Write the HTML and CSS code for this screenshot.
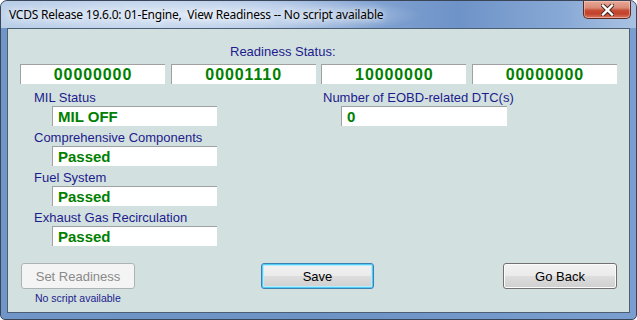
FILE: index.html
```html
<!DOCTYPE html>
<html>
<head>
<meta charset="utf-8">
<link rel="stylesheet" href="styles.css">
</head>
<body>
<div class="window">
  <div class="titlebar">
    <span class="title">VCDS Release 19.6.0: 01-Engine,  View Readiness -- No script available</span>
    <div class="close">
      <svg width="13" height="12" viewBox="0 0 13 12">
        <path d="M2 1.5 L11 10.5 M11 1.5 L2 10.5" stroke="#4a2a24" stroke-width="4.4" stroke-linecap="square" fill="none"/>
        <path d="M2 1.5 L11 10.5 M11 1.5 L2 10.5" stroke="#ffffff" stroke-width="2.4" stroke-linecap="square" fill="none"/>
      </svg>
    </div>
  </div>
  <div class="client">
    <div class="status-label">Readiness Status:</div>
    <div class="status-row">
      <div class="field bits">00000000</div>
      <div class="field bits">00001110</div>
      <div class="field bits">10000000</div>
      <div class="field bits">00000000</div>
    </div>
    <div class="columns">
      <div class="col">
        <div class="group"><div class="label">MIL Status</div><div class="field value">MIL OFF</div></div>
        <div class="group"><div class="label">Comprehensive Components</div><div class="field value">Passed</div></div>
        <div class="group"><div class="label">Fuel System</div><div class="field value">Passed</div></div>
        <div class="group"><div class="label">Exhaust Gas Recirculation</div><div class="field value">Passed</div></div>
      </div>
      <div class="col">
        <div class="group"><div class="label">Number of EOBD-related DTC(s)</div><div class="field value dtc">0</div></div>
      </div>
    </div>
    <div class="buttons">
      <div class="btn disabled">Set Readiness</div>
      <div class="btn default">Save</div>
      <div class="btn">Go Back</div>
    </div>
    <div class="note">No script available</div>
  </div>
</div>
</body>
</html>
```

FILE: styles.css
```css
html, body {
  margin: 0;
  padding: 0;
  background: #ffffff;
}

.window {
  box-sizing: border-box;
  width: 637px;
  height: 320px;
  border: 1px solid #3a4658;
  border-radius: 7px 7px 5px 5px;
  background: linear-gradient(to right, #7096c9 0%, #6c92c6 50%, #7a9ecf 100%);
  display: flex;
  flex-direction: column;
  overflow: hidden;
  font-family: "Liberation Sans", Arial, sans-serif;
}

.titlebar {
  height: 27px;
  flex: none;
  display: flex;
  align-items: flex-start;
  background:
    radial-gradient(ellipse 230px 22px at 190px 14px, rgba(232,240,250,0.85) 0%, rgba(220,232,246,0.55) 60%, rgba(220,232,246,0) 100%),
    linear-gradient(to right, #b8cde7 0%, #a9c1e2 25%, #86a6d4 55%, #6e93c8 72%, #87a8d5 88%, #a9c2e2 100%);
}

.title {
  white-space: pre;
  font-family: "Segoe UI", "Noto Sans", "Open Sans", sans-serif;
  font-size: 12px;
  letter-spacing: -0.22px;
  color: #000000;
  line-height: 27px;
  padding-left: 8px;
  text-shadow: 0 0 6px rgba(255,255,255,0.9), 0 0 10px rgba(255,255,255,0.7);
}

.close {
  margin-left: auto;
  margin-right: 5px;
  width: 48px;
  height: 18px;
  box-sizing: border-box;
  border: 1px solid #5b2a22;
  border-top: none;
  border-radius: 0 0 5px 5px;
  background: linear-gradient(to bottom, #e7a896 0%, #d98b77 40%, #c74d36 55%, #c2412a 75%, #d77a62 100%);
  box-shadow: inset 0 0 0 1px rgba(255,210,200,0.5);
  display: flex;
  align-items: center;
  justify-content: center;
}

.client {
  flex: 1;
  margin: 0 6px 6px 6px;
  border: 1px solid #4c5e74;
  background: #d3e0e0;
  display: flex;
  flex-direction: column;
  color: #1c1c8c;
}

.status-label {
  margin-top: 15px;
  margin-left: 222px;
  font-size: 13px;
  line-height: 15px;
}

.status-row {
  margin-top: 5px;
  margin-left: 12px;
  display: grid;
  grid-template-columns: repeat(4, 145px);
  column-gap: 5.67px;
}

.field {
  box-sizing: border-box;
  height: 20px;
  background: #ffffff;
  border-top: 1px solid #a0a0a0;
  border-left: 1px solid #a0a0a0;
  color: #008000;
  font-weight: bold;
  display: flex;
  align-items: center;
}

.bits {
  justify-content: center;
  font-size: 16px;
  letter-spacing: 0.9px;
}

.columns {
  margin-top: 6px;
  padding-left: 26px;
  display: grid;
  grid-template-columns: 289px auto;
}

.group {
  display: flex;
  flex-direction: column;
  margin-bottom: 4px;
}

.label {
  font-size: 13px;
  line-height: 15px;
}

.value {
  margin-top: 1px;
  margin-left: 18px;
  width: 165px;
  padding-left: 5px;
  font-size: 15px;
}

.dtc {
  width: 166px;
}

.buttons {
  margin-top: 13px;
  margin-left: 13px;
  display: flex;
}

.btn {
  box-sizing: border-box;
  width: 114px;
  height: 26px;
  border: 1px solid #707070;
  border-radius: 3px;
  background: linear-gradient(to bottom, #f2f2f2 0%, #ebebeb 48%, #dddddd 52%, #cfcfcf 100%);
  box-shadow: inset 0 0 0 1px #fbfbfb;
  color: #000000;
  font-size: 13px;
  display: flex;
  align-items: center;
  justify-content: center;
  margin-left: 126px;
}

.btn:first-child {
  margin-left: 0;
}

.btn.default {
  width: 113px;
  border-color: #3c7fb1;
  box-shadow: inset 0 0 0 1px #4fcdf7, inset 0 0 0 2px #b8ecfc;
}

.btn.default + .btn {
  margin-left: 129px;
}

.btn.disabled {
  border-color: #adb2b5;
  background: #f4f4f4;
  box-shadow: none;
  color: #8a8a8a;
}

.note {
  margin-top: 3px;
  margin-left: 27px;
  font-size: 10.5px;
  line-height: 13px;
}
```
